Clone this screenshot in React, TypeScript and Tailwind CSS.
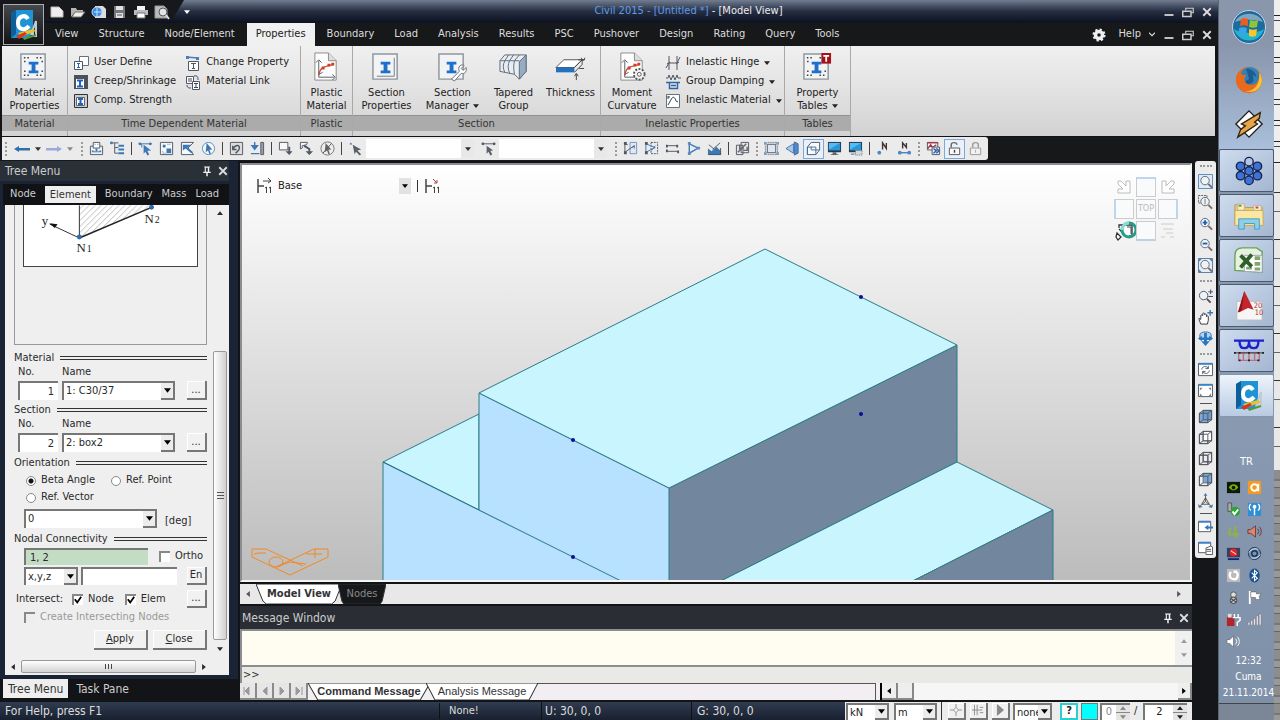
import React from 'react';

type IconProps = { name: string; className?: string };

const BLUE = '#3d78b4';
const INK = '#505862';

const magnifier = (
    <>
        <circle cx="7.5" cy="7" r="4.5" fill="#eef3f7" stroke="#5d6976" />
        <path d="M11 10.5l4 4" stroke="#7b6b6b" strokeWidth="2" />
    </>
);

const cube = (front: string, back: string) => (
    <>
        <path d="M1.500 4.500h9v10h-9zM5.500 1.500h9v10h-9z" fill="none" stroke={INK} />
        <path d="M2 5h8v9H2z" fill={front} />
        <path d="M6 2h8v9H6z" fill={back} />
        <path d="M1.500 4.500l4-3M10.500 4.500l4-3M10.500 14.500l4-3M1.500 14.500l4-3M1.500 4.500h9v10h-9zM5.500 1.500v10h9v-10z" fill="none" stroke={INK} />
    </>
);

// all drawn on a 16x16 grid
const glyphs: Record<string, React.ReactNode> = {
    back: <path d="M0 8l5-3v2h11v2.500H5V11z" fill="#2f6fae" />,
    forward: <path d="M16 8l-5-3v2H0v2.500h11V11z" fill="#9da9dd" />,
    selectGroup: (
        <>
            <path d="M1.500 5.500h13v9h-13z" fill="#eef2f6" stroke={INK} />
            <path d="M4.500 1.500h7v6h-7z" fill="#fff" stroke={INK} />
            <path d="M6 3h1v1H6zM9 3h1v1H9zM3 10h2v2H3zM11 10h2v2h-2zM7 8h2v3H7z" fill={BLUE} />
            <path d="M5 11.500h6" stroke={BLUE} />
        </>
    ),
    treeNodes: (
        <>
            <path d="M1 2h8M5 2v11h4M5 7h4" fill="none" stroke={INK} />
            <path d="M9 4h6v2H9zM9 8h6v2H9zM9 12h6v2H9z" fill={BLUE} />
            <circle cx="1.500" cy="2" r="1.500" fill={BLUE} />
        </>
    ),
    pickLine: (
        <>
            <path d="M1 3h14M4 3v4" stroke={BLUE} />
            <circle cx="2" cy="3" r="1.500" fill={BLUE} />
            <circle cx="13" cy="3" r="1.500" fill={BLUE} />
            <path d="M6 4l8 6-4 .5 2 4-2 1-2-4-2 2z" fill={BLUE} />
        </>
    ),
    pickWindow: (
        <>
            <path d="M1.500 1.500h13v13h-13z" fill="#f6f8fa" stroke={INK} />
            <path d="M4 4h3v3H4zM8 8h5v5H8z" fill={BLUE} />
            <path d="M9 3.500h4M4 11v2h3" fill="none" stroke={BLUE} strokeDasharray="1 1" />
        </>
    ),
    pickPolygon: (
        <>
            <path d="M1.500 1.500h13l-6 6 6 7h-13z" fill="#f6f8fa" stroke={INK} />
            <path d="M3 4h9L8 7l6 5-2 1-6-5-3 2z" fill={BLUE} />
        </>
    ),
    pickCircle: (
        <>
            <circle cx="8" cy="8" r="6.500" fill="#f4f7fa" stroke="#5f8bb8" />
            <path d="M6 2l6 7-3 .3 1.500 4-1.500.7-1.500-4L5 12z" fill={BLUE} />
        </>
    ),
    undoBox: (
        <>
            <path d="M1.500 1.500h13v13h-13z" fill="#ddd" stroke={INK} />
            <path d="M4 5v4h4M4 9c3-6 8-5 7-1 0 2-2 3-4 5" fill="none" stroke={INK} strokeWidth="1.500" />
        </>
    ),
    dropLine: (
        <>
            <path d="M5 1v6M2 5l3 4 3-4zM1 13.500h9" stroke={BLUE} strokeWidth="1.500" fill={BLUE} />
            <path d="M11.500 1.500h3v13h-3z" fill="#9aa1a8" stroke={INK} />
        </>
    ),
    unselectBox: (
        <>
            <path d="M1.500 1.500h9v8h-9z" fill="#f8f8f8" stroke={INK} />
            <path d="M11 6h2v5h2.500L12 15l-4-4h3z" fill={INK} />
        </>
    ),
    unselectPoly: (
        <>
            <path d="M9 1.500H1.500v7l2-1V5L8 4z" fill="#f8f8f8" stroke={INK} />
            <path d="M6 4l6 4v3h3l-4 4-4-4h3V9L5 6z" fill={INK} />
        </>
    ),
    unselectCircle: (
        <>
            <circle cx="8" cy="8" r="7" fill="#eee" stroke="#777" />
            <path d="M6 2l6 7-3 .3 1.500 4-1.500.7-1.500-4L5 12z" fill="#666" />
            <path d="M12 3L3 13" stroke="#555" />
        </>
    ),
    cursorNode: (
        <>
            <path d="M2 2h2v2H2z" fill="#7479c9" />
            <path d="M5 4l9 5-4 1 4 4-1.500 1.500-4-4L7 14z" fill="#59606a" />
        </>
    ),
    cursorElem: (
        <>
            <path d="M1 3h14" stroke={INK} />
            <circle cx="2" cy="3" r="1.500" fill={INK} />
            <circle cx="14" cy="3" r="1.500" fill={INK} />
            <path d="M6 5l7 5-3 .5 2 4-2 1-2-4-2 2z" fill="#59606a" />
        </>
    ),
    activate: (
        <>
            <path d="M7.500 1.500h7v12h-7z" fill="#dfe9f6" stroke="#6e95c6" />
            <path d="M2 2v11M1 3l4 1M2 12l10-7M10 7l2-2v3" fill="none" stroke={INK} />
            <path d="M1 1h3v3H1zM1 11h3v3H1z" fill={INK} />
        </>
    ),
    activateAlt: (
        <>
            <path d="M7.500 1.500h7v12h-7z" fill="none" stroke={INK} strokeDasharray="2 1" />
            <path d="M2 2v11M2 3l10 4L2 12M8 10l4-5" fill="none" stroke={BLUE} />
            <path d="M1 1h3v3H1zM1 11h3v3H1z" fill={INK} />
        </>
    ),
    parallel: (
        <>
            <path d="M2 5h12M2 11h12" stroke={INK} />
            <path d="M1 4h2v3H1zM12 4h2v3h-2zM1 9h2v3H1zM13 10h2v3h-2z" fill={INK} />
        </>
    ),
    triangle: (
        <>
            <path d="M3.500 3v10L13 7.500z" fill="#e2edf8" stroke="#4b78b5" strokeWidth="1.500" />
            <path d="M2 1h3v3H2zM2 12h3v3H2zM12 6h3v3h-3z" fill="#5b8ac1" />
        </>
    ),
    landscape: (
        <>
            <path d="M1 8l4 3 5-5 5 5v4H1z" fill={BLUE} />
            <path d="M2 4l6 5M14 2L6 9M1.500 14.500h13v-7" stroke={INK} fill="none" />
        </>
    ),
    invert: (
        <>
            <path d="M1.500 4.500h7v10h-7zM6.500 1.500h8v11h-8z" fill="#e6e6ee" stroke={INK} />
            <path d="M3 12L12 3M5 4v4h4M9 10h4V6" stroke="#666" strokeWidth="1.500" fill="none" />
        </>
    ),
    fence: (
        <>
            <path d="M3.500 3.500h9v9h-9z" fill="#dce7f2" stroke={INK} />
            <path d="M0 1h3v3H0zM13 1h3v3h-3zM0 12h3v3H0zM13 12h3v3h-3z" fill="#7ba0c8" />
            <path d="M4 1.500h9M4 14.500h9M1.500 5v7M14.500 5v7" stroke={INK} strokeDasharray="1 1" />
        </>
    ),
    perspective: (
        <>
            <path d="M1 8l8-5v10z" fill="#acc7e4" stroke="#4b78b5" />
            <path d="M10 1l4 2v10l-4 2z" fill="#4b8bd0" stroke="#3c6da5" />
        </>
    ),
    hidden: (
        <>
            <path d="M1.500 6.500l4-5h9v8l-4 5h-9z" fill="#f6fafd" stroke={INK} />
            <path d="M1.500 14.500v-8h9M10.500 6.500v8M5.500 6V9.500h9" fill="none" stroke="#4b6d94" />
        </>
    ),
    monitor: (
        <>
            <path d="M1 1h14v11H1z" fill="#283a48" />
            <path d="M2 2h12v8H2z" fill="#2797dc" />
            <path d="M2 2h12L2 9z" fill="#55bbf2" />
            <path d="M6 12h4v2H6zM4 14h8v1H4z" fill="#596570" />
        </>
    ),
    monitorOpt: (
        <>
            <path d="M1 1h14v11H1z" fill="#283a48" />
            <path d="M2 2h12v8H2z" fill="#2797dc" />
            <path d="M2 2h12L2 9z" fill="#55bbf2" />
            <path d="M8 10h7v5H8z" fill="#d3d9de" stroke="#61707c" strokeDasharray="1 1" />
            <path d="M3 14h4" stroke="#596570" />
        </>
    ),
    nodeNo: (
        <>
            <circle cx="3.500" cy="12.500" r="2" fill="#4a85c4" />
            <path d="M7 9V2l4 6V2" fill="none" stroke="#433" strokeWidth="1.500" />
        </>
    ),
    elemNo: (
        <>
            <path d="M3 12.500h10" stroke="#4a85c4" strokeWidth="1.500" />
            <circle cx="3" cy="12.500" r="2" fill="#4a85c4" />
            <circle cx="13" cy="12.500" r="2" fill="#4a85c4" />
            <path d="M6 8V2l4 5V2" fill="none" stroke="#433" strokeWidth="1.500" />
        </>
    ),
    windows: (
        <>
            <path d="M1.500 1.500h11v8h-11z" fill="#fff" stroke={INK} />
            <path d="M1 2h12M2 8l3-4 2 3 4-3" fill="none" stroke="#a83443" strokeWidth="1.500" />
            <path d="M6.500 6.500h8v8h-8z" fill="#e3eaf5" stroke={INK} />
            <path d="M8 8l3 2.500L8 13M11 8l3 2.500L11 13" fill="none" stroke="#325fa9" strokeWidth="1.500" />
        </>
    ),
    unlock: (
        <>
            <path d="M4.500 7V4c0-3 6-3 6 0" fill="none" stroke="#666" strokeWidth="1.500" />
            <path d="M2.500 7.500h11v7h-11z" fill="#fafafa" stroke="#555" />
            <path d="M8 9.500v3" stroke="#444" strokeWidth="1.500" />
        </>
    ),
    lock: (
        <>
            <path d="M5 7V4c0-3 6-3 6 0v3" fill="none" stroke="#999" strokeWidth="1.500" />
            <path d="M2.500 7.500h11v7h-11z" fill="#f1f1f1" stroke="#999" />
            <path d="M8 9.500v3" stroke="#aaa" />
        </>
    ),
    zoomFit: (
        <>
            <path d="M.5.5h15v15H.5z" fill="#dfeaf4" stroke="#5586b9" />
            {magnifier}
        </>
    ),
    zoomWindow: (
        <>
            <path d="M.5.5h9v8h-9z" fill="none" stroke={INK} strokeDasharray="2 1" />
            {magnifier}
            <path d="M7.500 4v6" stroke="#777" />
        </>
    ),
    zoomIn: (
        <>
            {magnifier}
            <path d="M5 7h5M7.500 4.500v5" stroke="#1f63b5" strokeWidth="2" />
        </>
    ),
    zoomOut: (
        <>
            {magnifier}
            <path d="M5 7h5" stroke="#1f63b5" strokeWidth="2" />
        </>
    ),
    zoomAll: (
        <>
            <path d="M.5.5h15v15H.5z" fill="#e7edf2" stroke="#52779c" />
            {magnifier}
            <path d="M1 1h3L1 4zM15 1h-3l3 3zM1 15v-3l3 3z" fill="#4a83be" />
        </>
    ),
    zoomDynamic: (
        <>
            <circle cx="6" cy="7" r="4.500" fill="#eef3f7" stroke="#4d5966" />
            <path d="M9.500 10.500l4 4" stroke="#5b4b4b" strokeWidth="2" />
            <path d="M11 3h5M13.500.5v5M11 8h5" stroke="#447" />
        </>
    ),
    pan: (
        <>
            <path d="M3 15c-1-3-2-4-2-6l2 1V6c0-1 2-1 2 0V4c0-1 2-1 2 0v1c0-1 2-1 2 0v2c0-1 2-1 2 0v4l-1 4z" fill="#fff" stroke="#333" />
            <path d="M10 3h6M13 0v6" stroke={BLUE} strokeWidth="1.500" />
        </>
    ),
    rotate: (
        <>
            <path d="M2 4c0-4 12-4 12 0v5H2z" fill="#b9d3ec" stroke="#2f6ead" />
            <path d="M6.500 2h3v9h3L8 16l-4.500-5h3z" fill="#2776c2" />
            <path d="M0 8l4-3v2h8V5l4 3-4 3V9H4v2z" fill="#2776c2" />
        </>
    ),
    redraw: (
        <>
            <path d="M.5 1.500h15v13H.5z" fill="#fff" stroke={INK} />
            <path d="M1 2h14" stroke="#3a82cb" strokeWidth="2" />
            <path d="M4 8c0-4 6-4 7-1M12 9c0 4-6 4-7 1M11 4v3H8M5 13v-3h3" fill="none" stroke={INK} />
        </>
    ),
    fullView: (
        <>
            <path d="M.5 1.500h15v13H.5z" fill="#fff" stroke={INK} />
            <path d="M1 2h14" stroke="#3a82cb" strokeWidth="2" />
            <path d="M2 5h3L2 8zM14 5h-3l3 3zM2 14v-3l3 3zM14 14v-3l-3 3z" fill="#78818a" />
        </>
    ),
    cubeSolid: cube('#7ea9dc', '#6f9bd2'),
    cubeWire: cube('none', '#ffffff'),
    cubeWire2: cube('none', 'none'),
    cubeHalf: cube('#eef2f7', '#7ba6d8'),
    axes: (
        <>
            <path d="M8 1v8l-6 5M8 9l6 5M8 5l-4 7h8z" fill="none" stroke={INK} />
            <path d="M6 3l2-3 2 3zM0 12l1 4 4-1zM16 12l-1 4-4-1z" fill="#4879ad" />
        </>
    ),
    winLeft: (
        <>
            <path d="M.5 2.500h13v11H.5z" fill="#fff" stroke={INK} />
            <path d="M1 3h12" stroke="#3a82cb" strokeWidth="2" />
            <path d="M7 9l4-3v2h5v2h-5v2z" fill="#3578b9" />
        </>
    ),
    winHand: (
        <>
            <path d="M.5 2.500h13v11H.5z" fill="#fff" stroke={INK} />
            <path d="M1 3h12" stroke="#3a82cb" strokeWidth="2" />
            <path d="M8.500 8.500l5-2 2 1v8h-7zM9 10h5M9 12h5" fill="#fff" stroke={INK} />
        </>
    ),
    story: (
        <>
            <path d="M2 1v14M2 8h6" stroke="#444" strokeWidth="1.500" />
            <path d="M7 3h8M12 0l3 3-3 2M9 10l1.500-1v6M13 10l1.500-1v6" fill="none" stroke="#444" />
        </>
    ),
    storyAlt: (
        <>
            <path d="M2 1v14M2 8h6" stroke="#444" strokeWidth="1.500" />
            <path d="M9 1l4 4M13 2v3h-3" fill="none" stroke="#a44" />
            <path d="M9 10l1.500-1v6M13 10l1.500-1v6" fill="none" stroke="#444" />
        </>
    ),
    userDefine: (
        <>
            <path d="M6.500 1.500h9v9h-9z" fill="#fff" stroke="#67707a" />
            <path d="M1.500 6.500h8v8h-8z" fill="#fff" stroke={INK} />
            <path d="M4 8.500h3M5.500 8.500v4M4 12.500h3" stroke="#2865b2" />
        </>
    ),
    creep: (
        <>
            <path d="M1 1h14v14H1z" fill="#4c525a" />
            <path d="M3 5h8v9H3z" fill="#fff" />
            <path d="M4 6.500h6M7 6.500v6M4 12.500h6" stroke="#1d5fc4" strokeWidth="2" />
        </>
    ),
    comp: (
        <>
            <path d="M1.500 1.500h13v13h-13z" fill="#c8ced6" stroke="#333" />
            <path d="M3.500 4.500h8v8h-8z" fill="#fff" stroke="#666" />
            <path d="M5 6h5M7.500 6v5M5 11h5" stroke="#1d5fc4" strokeWidth="2" />
        </>
    ),
    changeProp: (
        <>
            <path d="M1 2l12 1" stroke="#4c7fb9" strokeWidth="1.500" />
            <path d="M1 1h3v3H1zM11 2h3v3h-3z" fill="#4c7fb9" />
            <path d="M3.500 6.500h10v9h-10z" fill="#fff" stroke={INK} />
            <path d="M6 8.500h5M8.500 8.500v5M7 13.500h3" stroke={INK} />
        </>
    ),
    link: (
        <>
            <path d="M1.500 2.500h7v7h-7z" fill="#fff" stroke={INK} />
            <path d="M7.500 7.500h7v8h-7z" fill="#fff" stroke={INK} />
            <path d="M3 5h4M3 7h4M9 9.500h4M11 9.500v4M9 13.500h4M9 2c4-1 4 2 4 4M2 11c0 3 2 3 4 3" fill="none" stroke="#446" />
        </>
    ),
    hinge: <path d="M4 1v14M12 1v14M1 13l3-5h8l3-6M2 9l3-2M11 9l3-2" fill="none" stroke={INK} />,
    damping: (
        <>
            <path d="M1 4h2l1-3 2 5 2-5 2 5 2-5 1 3h3" fill="none" stroke={INK} />
            <path d="M1 8.500h14M4.500 8.500v6h8v-6M6 11.500h5" fill="none" stroke="#2f65a6" strokeWidth="1.500" />
        </>
    ),
    inelastic: (
        <>
            <path d="M1.500 1.500h13v13h-13z" fill="#fff" stroke="#68717b" />
            <path d="M3 12l4-7c2-2 3 0 4 3l2 1M3 4h2M3 3v3" fill="none" stroke="#345" />
        </>
    ),
    pin: <path d="M4 2h8v1h-1v6h2v1.500H9V15H7v-4.500H3V9h2V3H4zM6.500 3.500V9H9V3.500z" fill="#f1f1f1" fillRule="evenodd" />,
    close: <path d="M3 3l10 10M13 3L3 13" stroke="#ddd" strokeWidth="2.400" />,
    min: <path d="M2 12h12" stroke="#ccc" strokeWidth="2.500" />,
    restore: (
        <>
            <path d="M5 6V3h10v6h-3" fill="none" stroke="#ccc" strokeWidth="1.500" />
            <path d="M1 7h11v7H1z" fill="none" stroke="#ccc" strokeWidth="2" />
        </>
    ),
    newFile: <path d="M2 3h8l4 4v6H2z" fill="#f0efee" stroke="#bbb" />,
    open: (
        <>
            <path d="M1 4h5l1 2h6v2H5l-4 5z" fill="#b8b4ae" />
            <path d="M5 8h10l-4 5H2z" fill="#eee" stroke="#777" />
        </>
    ),
    web: (
        <>
            <path d="M4 2h8l3 3v9H4z" fill="#ddd" />
            <circle cx="6" cy="8" r="5" fill="#3c8bdd" stroke="#bcdcff" />
            <path d="M6 4v10M3 8h7" stroke="#c7e3ff" />
        </>
    ),
    save: (
        <>
            <path d="M2 2h11v12H2z" fill="#77777b" />
            <path d="M4 2h7v4H4zM4 9h7v5H4z" fill="#e0e0e6" />
            <path d="M5 11h5" stroke="#555" />
        </>
    ),
    print: (
        <>
            <path d="M4 2h8v5H4z" fill="#f3f3f3" />
            <path d="M1 6h14v5H1z" fill="#b9bcc2" />
            <path d="M4 9h8v5H4z" fill="#fff" stroke="#777" />
        </>
    ),
    preview: (
        <>
            <path d="M1 2h9l3 3v9H1z" fill="#bcbcbe" stroke="#999" />
            <circle cx="9" cy="8" r="4" fill="#e4e4e4" stroke="#555" />
            <path d="M12 11l3 4" stroke="#ddd" strokeWidth="2" />
        </>
    ),
    gear: (
        <>
            <circle cx="8" cy="8" r="6" fill="none" stroke="#eee" strokeWidth="3" strokeDasharray="2.400 2.300" />
            <circle cx="8" cy="8" r="4" fill="none" stroke="#eee" strokeWidth="4" />
        </>
    ),
};

const Icon = ({ name, className = 'size-4' }: IconProps) => (
    <svg viewBox="0 0 16 16" className={`shrink-0 ${className}`} aria-hidden="true">
        {glyphs[name]}
    </svg>
);

const iBeam = <path d="M10 10h10v3h-3v6h3v3H10v-3h3v-6h-3z" fill="#1f70c8" />;
const plate = <path d="M2 2h25v26H2z" fill="#f1f3f5" stroke="#8f969e" strokeWidth="1.500" />;
const curve = (
    <>
        <path d="M4 1h14l8 8v20H4z" fill="#fdfdfd" stroke="#8a8a8a" />
        <path d="M18 1v8h8" fill="#ddd" stroke="#8a8a8a" />
        <path d="M8 9v17h16M8 23l4-2M5 11l3-3 3 3M22 23l3 3-3 3" fill="none" stroke="#59626c" />
        <path d="M8 24c1-8 5-9 15-11" fill="none" stroke="#c34d36" strokeWidth="1.500" />
        <path d="M11 15h3v3h-3zM17 12h3v3h-3zM21 11h3v3h-3z" fill="#cf4028" />
    </>
);
const dots = <path d="M5 6h7M18 6h7M5 24h7M18 24h7M6 9v3M6 19v3M24 9v3M24 19v3" stroke="#444" strokeWidth="1.600" strokeDasharray="1.600 2" fill="none" />;

const bigGlyphs: Record<string, React.ReactNode> = {
    material: <>{plate}{dots}{iBeam}</>,
    plastic: curve,
    section: (
        <>
            {plate}
            <path d="M6 25h18V6" stroke="#777f88" fill="none" />
            {iBeam}
        </>
    ),
    manager: (
        <>
            {plate}
            {iBeam}
            <path d="M15 28l8-8c-2-5 2-8 5-6l-3 3 2 2 3-3c1 5-2 7-5 6l-7 8z" fill="#fff" stroke="#68717a" />
        </>
    ),
    tapered: (
        <>
            <path d="M2 9l5-6h22v17l-7 8-5-5-15-3z" fill="#e8edf3" stroke="#606b77" />
            <path d="M22 10l7-7v17l-7 8z" fill="#96abc4" stroke="#606b77" />
            <path d="M7 9c-2 4-2 8 0 12M12 9c-2 4-2 8 0 13M17 9c-1 4-1 9 0 14M2 9h20M7 9l4-6M12 9l4-6M17 9l5-6" fill="none" stroke="#606b77" />
        </>
    ),
    thickness: (
        <>
            <path d="M1 16l8-8h19l-8 8z" fill="#fff" stroke="#555" />
            <path d="M1 16h19v5H1z" fill="#2470c0" />
            <path d="M20 16l8-8v5l-8 8M24 8h7M25 17h5M27 6l2 3 2-3M22 29v-6M20 25l2-3 2 3" fill="none" stroke="#444" />
        </>
    ),
    moment: (
        <>
            {curve}
            <circle cx="23" cy="23" r="5.500" fill="#f5f5f5" stroke="#555" strokeWidth="2" strokeDasharray="2 1.500" />
            <circle cx="23" cy="23" r="2" fill="#fff" stroke="#555" />
        </>
    ),
    tables: (
        <>
            {plate}
            {dots}
            {iBeam}
            <path d="M20 1h10v11H20z" fill="#a3121a" />
            <path d="M22 4h6M25 4v6" stroke="#fff" strokeWidth="1.800" />
        </>
    ),
};

const Caret = ({ className = '' }: { className?: string }) => (
    <svg viewBox="0 0 8 5" className={`h-[4px] w-[6px] shrink-0 ${className}`} aria-hidden="true">
        <path d="M0 0h8L4 5z" fill="currentColor" />
    </svg>
);

const BigButton = ({ icon, lines, menu, className = '' }: { icon: string; lines: string[]; menu?: boolean; className?: string }) => (
    <button className={`flex flex-col items-center pt-[6px] leading-[13px] ${className}`}>
        <svg viewBox="0 0 32 32" className="mb-[3px] h-[31px] w-[31px]" aria-hidden="true">
            {bigGlyphs[icon]}
        </svg>
        {lines.map((line, i) => (
            <span key={line} className="flex items-center gap-1 whitespace-nowrap">
                {line}
                {menu && i === lines.length - 1 && <Caret />}
            </span>
        ))}
    </button>
);

const SmallButton = ({ icon, label, menu }: { icon: string; label: string; menu?: boolean }) => (
    <button className="flex h-[19px] items-center gap-[5px] whitespace-nowrap">
        <Icon name={icon} />
        {label}
        {menu && <Caret />}
    </button>
);

const RibbonGroup = ({ title, className, children }: { title: string; className: string; children: React.ReactNode }) => (
    <section className={`flex shrink-0 flex-col border-r border-[#a9a9a9] ${className}`}>
        <div className="flex flex-1 justify-center">{children}</div>
        <h2 className="mb-[5px] h-[16px] border-t border-[#909090] bg-[#ababab] text-center leading-[15px] text-[#333]">{title}</h2>
    </section>
);

const menus = ['View', 'Structure', 'Node/Element', 'Properties', 'Boundary', 'Load', 'Analysis', 'Results', 'PSC', 'Pushover', 'Design', 'Rating', 'Query', 'Tools'];

const WindowButtons = () => (
    <div className="flex items-center gap-[7px]">
        <button aria-label="Minimize"><Icon name="min" className="size-3" /></button>
        <button aria-label="Restore"><Icon name="restore" className="size-3" /></button>
        <button aria-label="Close"><Icon name="close" className="size-3" /></button>
    </div>
);

const Logo = ({ className }: { className: string }) => (
    <svg viewBox="0 0 32 32" className={className} aria-hidden="true">
        <path d="M3 4l5-3h17v23l-5 5H3z" fill="#1f93d6" />
        <path d="M3 4l5-3v24l-5 4z" fill="#0d5f9b" />
        <path d="M20 10c-3-5-10-3-10 4s7 8 11 3" fill="none" stroke="#fff" strokeWidth="4" />
        <path d="M23 26l5-14v15h-3v-5" fill="none" stroke="#c3cbd2" strokeWidth="2" />
        <path d="M10 24l15-4 3 2-15 6z" fill="#e8c22c" />
        <path d="M8 27l9-4 2 2-8 5z" fill="#d8371f" />
        <path d="M15 29l13-4v2l-12 4z" fill="#4f9a3a" />
    </svg>
);

const Header = () => (
    <header className="relative shrink-0">
        <div className="flex h-[23px] items-center bg-linear-to-b from-[#727d92] via-[#252e42] to-[#0c1120] pr-[5px]">
            <div className="flex h-full w-[184px] items-center gap-[5px] bg-[#17181b] pl-[49px] [clip-path:polygon(0_0,100%_0,94%_80%,91%_88%,0_88%)]">
                {['newFile', 'open', 'web', 'save', 'print', 'preview'].map((n) => (
                    <button key={n} aria-label={n}><Icon name={n} /></button>
                ))}
            </div>
            <Caret className="text-white" />
            <h1 className="flex-1 pl-6 text-center text-[#eee]">
                <span className="text-[#5f9be6]">Civil 2015 - [Untitled *]</span> - [Model View]
            </h1>
            <WindowButtons />
        </div>
        <nav className="flex h-[23px] items-center bg-[#17181a] pl-[45px] pr-[5px] text-[#ddd]">
            {menus.map((m) => (
                <button key={m} className={m === 'Properties' ? 'mx-[2px] h-full bg-[#f0f0f0] px-[9px] text-[#222]' : 'px-[10px]'}>
                    {m}
                </button>
            ))}
            <span className="flex-1" />
            <button aria-label="Settings" className="mr-3"><Icon name="gear" className="size-[14px]" /></button>
            <button className="mr-2 flex items-center gap-2">
                Help
                <svg viewBox="0 0 8 5" className="h-[5px] w-[6px]" aria-hidden="true"><path d="M0 0l4 4 4-4" stroke="#ddd" strokeWidth="1.500" fill="none" /></svg>
            </button>
            <WindowButtons />
        </nav>
        <button aria-label="Application menu" className="absolute left-[3px] top-[4px] flex h-[41px] w-[41px] items-center justify-center border border-[#a9adb2] bg-linear-to-b from-[#45484c] to-[#141517]">
            <Logo className="size-8" />
        </button>
    </header>
);

const Ribbon = () => (
    <div className="mr-[3px] ml-[2px] flex h-[90px] shrink-0 bg-linear-to-b from-[#f0f0f0] via-[#e2e2e2] to-[#d2d2d2] text-[#222]">
        <RibbonGroup title="Material" className="w-[66px]">
            <BigButton icon="material" lines={['Material', 'Properties']} />
        </RibbonGroup>
        <RibbonGroup title="Time Dependent Material" className="w-[233px]">
            <div className="flex w-full gap-[9px] pt-[7px] pl-[5px]">
                <div className="flex flex-col">
                    <SmallButton icon="userDefine" label="User Define" />
                    <SmallButton icon="creep" label="Creep/Shrinkage" />
                    <SmallButton icon="comp" label="Comp. Strength" />
                </div>
                <div className="flex flex-col">
                    <SmallButton icon="changeProp" label="Change Property" />
                    <SmallButton icon="link" label="Material Link" />
                </div>
            </div>
        </RibbonGroup>
        <RibbonGroup title="Plastic" className="w-[52px]">
            <BigButton icon="plastic" lines={['Plastic', 'Material']} />
        </RibbonGroup>
        <RibbonGroup title="Section" className="w-[248px]">
            <BigButton icon="section" lines={['Section', 'Properties']} className="w-[66px]" />
            <BigButton icon="manager" lines={['Section', 'Manager']} menu className="w-[66px]" />
            <BigButton icon="tapered" lines={['Tapered', 'Group']} className="w-[56px]" />
            <BigButton icon="thickness" lines={['Thickness']} className="w-[58px]" />
        </RibbonGroup>
        <RibbonGroup title="Inelastic Properties" className="w-[184px]">
            <BigButton icon="moment" lines={['Moment', 'Curvature']} className="w-[62px]" />
            <div className="flex flex-1 flex-col pt-[7px] pl-[2px]">
                <SmallButton icon="hinge" label="Inelastic Hinge" menu />
                <SmallButton icon="damping" label="Group Damping" menu />
                <SmallButton icon="inelastic" label="Inelastic Material" menu />
            </div>
        </RibbonGroup>
        <RibbonGroup title="Tables" className="w-[66px]">
            <BigButton icon="tables" lines={['Property', 'Tables']} menu />
        </RibbonGroup>
    </div>
);

const Grip = () => <span className="mx-[3px] h-[14px] w-0 border-l-2 border-dotted border-[#999]" />;

const ToolRow = ({ items }: { items: string[] }) => (
    <>
        {items.map((n, i) =>
            n === '|' ? (
                <span key={i} className="flex w-[7px] justify-center"><span className="h-[13px] w-px bg-[#444]" /></span>
            ) : (
                <button key={i} aria-label={n} className={n === 'hidden' || n === 'unlock' ? 'flex h-5 w-[21px] items-center justify-center border border-[#7fa8d8] bg-[#e9f1fa]' : 'flex w-[21px] justify-center'}>
                    <Icon name={n} className="size-[15px]" />
                </button>
            ),
        )}
    </>
);

const FlatSelect = ({ label, className }: { label: string; className: string }) => (
    <span className={`relative flex ${className}`}>
        <select aria-label={label} className="h-full w-full appearance-none bg-white" />
        <span className="pointer-events-none absolute inset-y-0 right-0 flex w-[13px] items-center justify-center bg-[#e8e8e8]"><Caret /></span>
    </span>
);

const Toolbar = () => (
    <div className="mt-[1px] flex h-[24px] shrink-0 bg-[#17181a] pl-[2px]">
        <div className="flex h-[23px] items-center rounded-r-[3px] bg-[#ebebeb] text-[#333]">
            <Grip />
            <div className="flex w-[68px] items-center gap-[5px] pl-[4px]">
                <button aria-label="Undo"><Icon name="back" /></button>
                <Caret />
                <button aria-label="Redo"><Icon name="forward" /></button>
                <Caret className="text-[#888]" />
            </div>
            <Grip />
            <ToolRow items={['selectGroup', 'treeNodes', '|', 'pickLine', 'pickWindow', 'pickPolygon', 'pickCircle', '|', 'undoBox', 'dropLine', '|', 'unselectBox', 'unselectPoly', 'unselectCircle', '|', 'cursorNode']} />
            <FlatSelect label="Select nodes" className="h-[19px] w-[108px]" />
            <span className="w-1" />
            <ToolRow items={['cursorElem']} />
            <FlatSelect label="Select elements" className="h-[19px] w-[108px]" />
            <span className="w-[5px]" />
            <Grip />
            <ToolRow items={['activate', 'activateAlt', 'parallel', 'triangle', 'landscape', '|', 'invert']} />
            <Grip />
            <ToolRow items={['fence', 'perspective', 'hidden', 'monitor', 'monitorOpt', '|', 'nodeNo', 'elemNo']} />
            <Grip />
            <ToolRow items={['windows', 'unlock', 'lock']} />
            <span className="w-[2px]" />
        </div>
    </div>
);

const GroupHeading = ({ children }: { children: string }) => (
    <h3 className="flex h-[14px] items-center gap-[6px] leading-[14px]">
        {children}
        <span className="h-[4px] flex-1 border-y border-[#333]" />
    </h3>
);

const Combo = ({ id, label, value, className }: { id: string; label?: string; value: string; className: string }) => (
    <span className={`relative flex border-t-2 border-l-2 border-[#777] bg-white ${className}`}>
        <select id={id} aria-label={label} className="w-full appearance-none pl-[2px] outline-none" defaultValue={value}>
            <option>{value}</option>
        </select>
        <span className="pointer-events-none absolute inset-y-0 right-0 flex w-[14px] items-center justify-center border-r-2 border-b-2 border-[#777] bg-[#ececec] text-black">
            <Caret className="h-[5px] w-[7px]" />
        </span>
    </span>
);

const RaisedButton = ({ children, className }: { children: React.ReactNode; className: string }) => (
    <button className={`border-r-2 border-b-2 border-[#777] bg-[#f1f1f1] text-center shadow-[inset_1px_1px_0_#fff] ${className}`}>{children}</button>
);

const Radio = ({ id, label, checked }: { id: string; label: string; checked?: boolean }) => (
    <label htmlFor={id} className="flex items-center gap-[5px]">
        <input
            id={id}
            type="radio"
            name="orientation"
            defaultChecked={checked}
            className="size-[10px] appearance-none rounded-full border border-[#888] bg-white checked:bg-[radial-gradient(circle,#111_2px,#fff_3px)]"
        />
        {label}
    </label>
);

const Check = ({ id, label, checked, disabled }: { id: string; label: string; checked?: boolean; disabled?: boolean }) => (
    <label htmlFor={id} className={`flex items-center gap-[5px] whitespace-nowrap ${disabled ? 'text-[#999]' : ''}`}>
        <span className="relative flex">
            <input id={id} type="checkbox" defaultChecked={checked} disabled={disabled} className="size-[11px] appearance-none border-t-2 border-l-2 border-[#888] bg-white disabled:bg-[#eee]" />
            {checked && (
                <svg viewBox="0 0 10 10" className="pointer-events-none absolute left-[2px] top-[2px] size-2" aria-hidden="true"><path d="M1 4l3 4 5-7" fill="none" stroke="#000" strokeWidth="2.200" /></svg>
            )}
        </span>
        {label}
    </label>
);

const AssignRow = ({ id, no, name }: { id: string; no: string; name: string }) => (
    <div className="flex items-end">
        <div className="ml-1 flex w-10 flex-col">
            <label htmlFor={`${id}-no`} className="h-4 leading-[14px]">No.</label>
            <input id={`${id}-no`} defaultValue={no} className="h-[19px] w-full border-t-2 border-l-2 border-[#777] bg-white pr-1 text-right" />
        </div>
        <div className="ml-1 flex flex-1 flex-col">
            <label htmlFor={`${id}-name`} className="h-4 leading-[14px]">Name</label>
            <Combo id={`${id}-name`} value={name} className="h-[19px]" />
        </div>
        <RaisedButton className="ml-3 h-[19px] w-5 leading-3">...</RaisedButton>
    </div>
);

const AxisDiagram = () => (
    <svg viewBox="0 0 175 61" className="mx-auto block h-[62px] w-[175px] border border-t-0 border-[#444] bg-white" role="img">
        <defs>
            <pattern id="hatch" width="6" height="6" patternUnits="userSpaceOnUse">
                <path d="M0 6l6-6" stroke="#aaa" strokeWidth=".8" />
            </pattern>
        </defs>
        <path d="M56 0v33L129 2V0z" fill="url(#hatch)" />
        <path d="M56 0v33" stroke="#333" />
        <path d="M56 33L129 2" stroke="#222" strokeWidth="1.500" />
        <path d="M56 33L26 19" stroke="#333" />
        <path d="M26 18l8 1-3 4z" fill="#111" />
        <circle cx="56" cy="32" r="2.500" fill="#2d6bb1" />
        <circle cx="129" cy="2" r="2.500" fill="#2d6bb1" />
        <g className="font-['Liberation_Serif',serif] text-[13px]" fill="#222">
            <text x="18" y="20">y</text>
            <text x="53" y="47">N<tspan fontSize="10" dx="1">1</tspan></text>
            <text x="122" y="18">N<tspan fontSize="10" dx="1">2</tspan></text>
        </g>
    </svg>
);

const TreePanel = () => (
    <aside className="flex w-[238px] shrink-0 flex-col bg-[#1b2435] pr-[9px]">
        <div className="flex h-[20px] items-center bg-[#2a3038] pl-[5px] text-[12px] text-[#ccc]">
            <h2 className="flex-1">Tree Menu</h2>
            <button aria-label="Pin" className="mr-1"><Icon name="pin" className="size-3" /></button>
            <button aria-label="Close panel"><Icon name="close" className="size-3" /></button>
        </div>
        <div className="mt-[3px] ml-[3px] flex h-[21px] items-center gap-[9px] bg-[#101216] pl-[7px] text-[#ccc]">
            {['Node', 'Element', 'Boundary', 'Mass', 'Load'].map((t) => (
                <button key={t} className={t === 'Element' ? 'h-[17px] bg-[#eee] px-[5px] leading-4 text-[#333]' : ''}>
                    {t}
                </button>
            ))}
        </div>
        <div className="ml-[5px] flex min-h-0 flex-1 flex-col bg-[#efefef] text-[#2a2a2a]">
            <div className="flex min-h-0 flex-1">
                <div className="flex min-w-0 flex-1 flex-col pr-[6px] pl-[9px]">
                    <div className="mb-[6px] h-[140px] border border-t-0 border-[#999]"><AxisDiagram /></div>
                    <GroupHeading>Material</GroupHeading>
                    <AssignRow id="material" no="1" name="1: C30/37" />
                    <div className="h-[3px]" />
                    <GroupHeading>Section</GroupHeading>
                    <AssignRow id="section" no="2" name="2: box2" />
                    <div className="h-1" />
                    <GroupHeading>Orientation</GroupHeading>
                    <div className="mt-[2px] ml-3 grid h-[34px] grid-cols-[85px_1fr] items-center">
                        <Radio id="beta" label="Beta Angle" checked />
                        <Radio id="refpoint" label="Ref. Point" />
                        <Radio id="refvector" label="Ref. Vector" />
                    </div>
                    <div className="mt-[3px] ml-[10px] flex items-end gap-2">
                        <Combo id="angle" label="Angle" value="0" className="h-[19px] w-[133px]" />
                        <span className="leading-[14px]">[deg]</span>
                    </div>
                    <div className="h-1" />
                    <GroupHeading>Nodal Connectivity</GroupHeading>
                    <div className="mt-[2px] ml-[10px] flex items-center gap-[11px]">
                        <input aria-label="Nodal connectivity" defaultValue="1, 2" className="h-[17px] w-[124px] border-t-2 border-l-2 border-[#777] bg-[#c3dcc4] pl-1" />
                        <Check id="ortho" label="Ortho" />
                    </div>
                    <div className="mt-[2px] ml-[10px] flex">
                        <Combo id="coord" label="Coordinates" value="x,y,z" className="h-[18px] w-[54px]" />
                        <input aria-label="Coordinate value" className="ml-[3px] h-[18px] min-w-0 flex-1 border-t-2 border-l-2 border-[#777] bg-white" />
                        <RaisedButton className="ml-[10px] h-[18px] w-5 leading-3">En</RaisedButton>
                    </div>
                    <div className="mt-[5px] flex h-[18px] items-center">
                        <span className="ml-[2px] w-[56px]">Intersect:</span>
                        <Check id="node" label="Node" checked />
                        <span className="w-[11px]" />
                        <Check id="elem" label="Elem" checked />
                        <span className="flex-1" />
                        <RaisedButton className="h-[18px] w-5 leading-3">...</RaisedButton>
                    </div>
                    <div className="ml-[10px] flex h-[18px] items-center">
                        <Check id="create" label="Create Intersecting Nodes" disabled />
                    </div>
                    <div className="mt-[4px] flex justify-end gap-[5px]">
                        <RaisedButton className="h-5 w-[54px]"><u>A</u>pply</RaisedButton>
                        <RaisedButton className="h-5 w-[54px]"><u>C</u>lose</RaisedButton>
                    </div>
                </div>
                <div className="mr-[2px] flex w-[14px] flex-col items-center">
                    <Caret className="mt-[6px] rotate-180" />
                    <div className="mt-[136px] flex w-full flex-1 items-center justify-center rounded-[2px] border border-[#999] bg-linear-to-r from-white to-[#cfcfcf]">
                        <span className="h-[7px] w-[7px] border-y border-[#555] bg-[linear-gradient(#555,#555)] bg-[length:100%_1px] bg-center bg-no-repeat" />
                    </div>
                    <Caret className="my-[7px]" />
                </div>
            </div>
            <div className="flex h-[17px] items-center gap-[5px] pr-[22px] pl-[5px]">
                <Caret className="rotate-90" />
                <div className="flex h-[13px] flex-1 items-center justify-center rounded-[2px] border border-[#999] bg-linear-to-b from-white to-[#d3d3d3]">
                    <span className="h-[5px] w-[7px] border-x border-[#444] bg-[linear-gradient(#444,#444)] bg-[length:1px_100%] bg-center bg-no-repeat" />
                </div>
                <Caret className="-rotate-90" />
            </div>
        </div>
        <div className="mt-[4px] -mr-[9px] flex h-[23px] items-start bg-[#131417] pl-[3px] text-[12px] text-[#ccc]">
            <button className="h-[19px] bg-[#eee] px-[5px] text-[#333]">Tree Menu</button>
            <button className="h-[19px] px-2">Task Pane</button>
        </div>
    </aside>
);

const edge = '#2d7b85';

// isometric boxes, the parts below the canvas are clipped
const Model = () => (
    <svg className="absolute inset-0 h-full w-full" role="img">
        <g stroke={edge} strokeWidth="1">
            <path d="M141 297l96-48v97z" fill="#c9f5ff" />
            <path d="M141 297l260 130H141z" fill="#b8e0ff" />
            <path d="M237 345V228l190 95v120z" fill="#b8e0ff" stroke="none" />
            <path d="M141 297l260 130M237 345V228l190 95" fill="none" />
            <path d="M427 323l288-143v117L457 427h-30z" fill="#72869d" />
            <path d="M523 84L237 228l190 95 288-143z" fill="#c9f5ff" />
            <path d="M715 297l96 48-162 82H457z" fill="#c9f5ff" />
            <path d="M811 345v82H649z" fill="#72869d" />
        </g>
        <g fill="#0b0ba0">
            <circle cx="619" cy="132" r="2" />
            <circle cx="619" cy="249" r="2" />
            <circle cx="331" cy="275" r="2" />
            <circle cx="331" cy="392" r="2" />
        </g>
        <g fill="none" stroke="#f08a24">
            <path d="M10 384h14l37 17M10 384v8l38 18 38-18v-8H72l-38 18M12 389l4-1h8M64 389h16M73 384v9M34 402l14-5 16 2" />
            <ellipse cx="34" cy="397" rx="7" ry="5" />
        </g>
    </svg>
);

const ViewCube = () => {
    const face = 'size-5 border border-[#ccc] bg-[#f8fafc]';
    return (
        <div className="absolute top-[12px] right-[12px] grid grid-cols-3 gap-[2px] text-[9px] text-[#bbb]">
            <svg viewBox="0 0 20 20" className="size-5"><path d="M4 4h3l5 5V4h4v12H4v-4h5L4 7z" fill="#fff" stroke="#bbb" /></svg>
            <button aria-label="Back view" className={`${face} border-t-2 border-t-[#bcd6ee]`} />
            <svg viewBox="0 0 20 20" className="size-5"><path d="M16 4h-3L8 9V4H4v12h12v-4h-5l5-5z" fill="#fff" stroke="#bbb" /></svg>
            <button aria-label="Left view" className={`${face} border-l-2 border-l-[#bcd6ee]`} />
            <button className={face}>TOP</button>
            <button aria-label="Right view" className={`${face} border-r-2 border-r-[#bcd6ee]`} />
            <svg viewBox="0 0 20 20" className="size-5 overflow-visible">
                <path d="M5 7V4h13v11h-3M3 12l4 4-3 3-2-3zM5 8l4 4" fill="#fff" stroke="#333" strokeWidth="1.300" />
                <circle cx="15" cy="9" r="7" fill="none" stroke="#239d88" strokeWidth="3" />
                <path d="M8 9a7 7 0 0 1 7-7" fill="none" stroke="#8bdcd0" strokeWidth="3" />
                <path d="M13 6h4v7" fill="none" stroke="#445" />
            </svg>
            <button aria-label="Front view" className={`${face} border-b-2 border-b-[#bcd0e6]`} />
            <svg viewBox="0 0 20 20" className="size-5"><path d="M3 3h13M5 8h10M8 12h7M3 16h4M12 16h4" stroke="#ccc" /></svg>
        </div>
    );
};

const SheetTab = ({ children, left, dark, bold, className }: { children: string; left?: boolean; dark?: boolean; bold?: boolean; className: string }) => (
    <button className={`relative h-full ${className}`}>
        <svg viewBox="0 0 100 20" preserveAspectRatio="none" className="absolute inset-0 h-full w-full" aria-hidden="true">
            <path d={left ? 'M0 0l8 17 4 3h76l4-3 8-17z' : 'M0 0l8 20h84l8-20z'} fill={dark ? '#17181a' : '#fff'} stroke="#333" vectorEffect="non-scaling-stroke" />
        </svg>
        <span className={`relative whitespace-nowrap ${bold ? 'font-bold' : ''} ${dark ? 'text-[#888]' : 'text-[#333]'}`}>{children}</span>
    </button>
);

const ModelView = () => (
    <section className="flex min-h-0 flex-1 flex-col">
        <div className="relative min-h-0 flex-1 overflow-hidden border-2 border-[#f4f4f4] border-t-[#8b8d90] border-l-[#8b8d90] bg-linear-to-b from-white to-[#bcbcbc]">
            <Model />
            <div className="absolute top-[11px] left-[14px] flex h-5 items-center">
                <Icon name="story" />
                <div className="relative ml-1 flex h-4 w-[135px]">
                    <select aria-label="Story" className="w-full appearance-none pl-[2px] leading-4 text-[#222]">
                        <option>Base</option>
                    </select>
                    <span className="pointer-events-none absolute inset-y-0 right-0 flex w-3 items-center justify-center bg-[#e2e2e2]"><Caret /></span>
                </div>
                <span className="ml-[6px] h-3 w-px bg-[#333]" />
                <button aria-label="Next story" className="ml-[6px]"><Icon name="storyAlt" /></button>
            </div>
            <ViewCube />
        </div>
        <div className="mt-[2px] flex h-[20px] items-center bg-[#e8e8e8]">
            <Caret className="mx-[5px] rotate-90 text-[#555]" />
            <SheetTab left bold className="w-[86px]">Model View</SheetTab>
            <SheetTab left dark className="-ml-1 w-[48px]">Nodes</SheetTab>
            <span className="flex-1" />
            <Caret className="mr-[10px] -rotate-90 text-[#555]" />
        </div>
    </section>
);

const MessageWindow = () => (
    <section className="flex shrink-0 flex-col">
        <div className="mt-[2px] flex h-[23px] items-center bg-[#2a2d34] pr-[2px] pl-[2px] text-[12px] text-[#ccc]">
            <h2 className="flex-1">Message Window</h2>
            <button aria-label="Pin messages" className="mr-1"><Icon name="pin" className="size-3" /></button>
            <button aria-label="Close messages"><Icon name="close" className="size-3" /></button>
        </div>
        <div className="flex h-[36px] border-t-2 border-l-2 border-[#8b8d90] bg-[#fffcf2]">
            <textarea aria-label="Messages" readOnly className="flex-1 resize-none outline-none" />
            <div className="flex w-[17px] flex-col items-center justify-between bg-[#f0f0f0] py-2 text-[#999]">
                <Caret className="rotate-180" />
                <Caret />
            </div>
        </div>
        <div className="flex h-[18px] items-center border-t-2 border-l-2 border-[#8b8d90] bg-[#e9e9e6] pl-[1px] text-[#333]">
            <label htmlFor="cmd">&gt;&gt;</label>
            <input id="cmd" className="ml-1 flex-1 outline-none" />
        </div>
        <div className="flex h-[17px] items-stretch bg-[#f2eef2] font-['Liberation_Sans',sans-serif]">
            {['M6 1v8L2 5zM1 1v8', 'M7 1v8L3 5z', 'M3 1v8l4-4z', 'M2 1v8l4-4zM8 1v8'].map((d) => (
                <button key={d} aria-label="Scroll tabs" className="flex w-[17px] items-center justify-center border-r-2 border-b-2 border-[#8a8a8a] bg-[#e6e6e6]">
                    <svg viewBox="0 0 10 10" className="size-[10px]"><path d={d} fill="#999" stroke="#999" /></svg>
                </button>
            ))}
            <SheetTab bold className="w-[122px]">Command Message</SheetTab>
            <SheetTab className="-ml-1 w-[112px]">Analysis Message</SheetTab>
            <span className="flex-1 border-t border-r border-[#555]" />
            <div className="ml-1 flex w-[312px] justify-between border-l-2 border-black bg-[#f6f6f6]">
                <div className="flex">
                    <button aria-label="Scroll left" className="flex w-4 items-center justify-center border-r-2 border-b-2 border-[#888] bg-[#eee]"><Caret className="rotate-90" /></button>
                    <span className="w-4 border-r-2 border-b-2 border-[#888] bg-[#eee]" />
                </div>
                <button aria-label="Scroll right" className="flex w-[14px] items-center justify-center border-r-2 border-b-2 border-[#888] bg-[#eee]"><Caret className="-rotate-90" /></button>
            </div>
        </div>
    </section>
);

const viewTools = ['zoomFit', 'zoomWindow', 'zoomIn', 'zoomOut', 'zoomAll', '.', 'zoomDynamic', 'pan', 'rotate', '.', 'redraw', 'fullView', '-', 'cubeSolid', 'cubeWire', 'cubeWire2', 'cubeHalf', 'axes', '-', 'winLeft', 'winHand'];

const ViewToolbar = () => (
    <div className="w-[26px] shrink-0 bg-[#151619] pl-[3px]">
        <div className="flex w-[21px] flex-col items-center rounded-[3px] bg-[#ececec]">
            <span className="my-[4px] w-3 border-t-2 border-dotted border-[#999]" />
            {viewTools.map((n, i) => {
                if (n === '.') return <span key={i} className="my-[4px] w-3 border-t-2 border-dotted border-[#999]" />;
                if (n === '-') return <span key={i} className="my-[2px] w-3 border-t border-[#555]" />;
                return (
                    <button key={i} aria-label={n} className="flex h-[21px] items-center"><Icon name={n} className="size-[15px]" /></button>
                );
            })}
        </div>
    </div>
);

const Spinner = ({ label, value, className }: { label: string; value: string; className: string }) => (
    <span className={`flex h-[17px] border-t-2 border-l-2 border-[#777] bg-white ${className}`}>
        <input aria-label={label} defaultValue={value} className="min-w-0 flex-1 text-center outline-none" />
        <span className="flex w-[14px] shrink-0 flex-col items-center justify-around bg-[#e4e4e4]">
            <Caret className="rotate-180" />
            <span className="h-px w-full bg-[#888]" />
            <Caret />
        </span>
    </span>
);

const StatusBar = () => (
    <footer className="flex h-[18px] shrink-0 items-center bg-linear-to-b from-[#303c50] to-[#18202f] text-[#ddd]">
        <span className="w-[439px] pl-[5px] text-[12px]">For Help, press F1</span>
        <span className="w-[102px] border-l border-[#111] pl-[9px]">None!</span>
        <span className="w-[150px] border-l border-[#111] pl-[3px] text-[12px]">U: 30, 0, 0</span>
        <span className="flex-1 border-l border-[#111] pl-[5px] text-[12px]">G: 30, 0, 0</span>
        <div className="flex h-full w-[347px] items-center bg-[#ececec] text-[#222]">
            <Combo id="force" label="Force unit" value="kN" className="ml-[1px] h-[17px] w-[43px]" />
            <Combo id="length" label="Length unit" value="m" className="ml-[5px] h-[17px] w-[43px]" />
            <span className="ml-1 h-full w-px bg-[#333]" />
            {['M8 5l3 3-3 3-3-3zM1 8h4M11 8h4M8 1v4M8 11v4', 'M4 2v12M7 2v12M1 8h12M10 5h4M10 11h4', 'M5 2v12l7-6z'].map((d, i) => (
                <RaisedButton key={d} className={i === 0 ? 'ml-[6px] flex h-[17px] w-[18px] items-center justify-center' : 'ml-1 flex h-[17px] w-[18px] items-center justify-center'}>
                    <svg viewBox="0 0 16 16" className="size-[14px]" aria-hidden="true"><path d={d} fill={i === 2 ? '#888' : 'none'} stroke="#888" /></svg>
                </RaisedButton>
            ))}
            <Combo id="filter" label="Filter" value="none" className="ml-[3px] h-[17px] w-[39px]" />
            <button className="ml-2 h-[17px] w-[18px] border-2 border-[#2ad0d0] bg-white leading-3 font-bold">?</button>
            <button aria-label="Colour" className="ml-[3px] h-[17px] w-[17px] border border-[#777] bg-[#00ffff]" />
            <Spinner label="Step" value="0" className="ml-[2px] w-[30px] text-[#888]" />
            <span className="mx-1">/</span>
            <Spinner label="Steps" value="2" className="ml-[2px] w-[44px]" />
        </div>
        <span className="h-full w-[26px] bg-[#151619]" />
    </footer>
);

const apps: React.ReactNode[] = [
    <g key="flower" fill="#3f72d8" stroke="#16264f" strokeWidth="1.500">
        <circle cx="16" cy="6" r="4.500" fill="#b3c6ea" /><circle cx="7" cy="11" r="4.500" /><circle cx="25" cy="11" r="4.500" />
        <circle cx="7" cy="21" r="4.500" /><circle cx="25" cy="21" r="4.500" /><circle cx="16" cy="26" r="4.500" /><circle cx="16" cy="16" r="4.500" />
    </g>,
    <g key="folder">
        <path d="M1 4h9l2 3h18v18H1z" fill="#e9cf73" stroke="#b7984a" />
        <path d="M4 3h7v7H4zM21 5h8v7h-8z" fill="#f7f0c2" stroke="#caa" />
        <path d="M5 4h3v2H5z" fill="#4b9a3e" />
        <path d="M23 6h3v2h-3z" fill="#c44" />
        <path d="M1 10h30v16H1z" fill="#f9e8a4" stroke="#c5a95c" />
        <path d="M5 30V19h22v11h-5v-6H11v6z" fill="#8fcfe6" stroke="#4b9dba" />
    </g>,
    <g key="excel">
        <path d="M1 26V10c0-5 3-8 8-8h15l6 4v22z" fill="#e6f2dd" stroke="#69a35a" strokeWidth="1.500" />
        <path d="M11 10h19v18l-19-1z" fill="#fff" stroke="#9ab" />
        <path d="M22 11h6v4h-6zM22 17h6v4h-6zM13 22h6v3h-6zM22 23h6v3h-6z" fill="#84a66d" />
        <path d="M7 10l12 12M19 9L7 23" stroke="#2f5f2a" strokeWidth="4" />
    </g>,
    <g key="cad">
        <path d="M3 11h27v20H3z" fill="#f6f6f6" stroke="#bbb" />
        <path d="M11 0l10 20-6-2-10 5z" fill="#c4252d" />
        <path d="M11 0L8 21l-4 2z" fill="#8d1219" />
        <text x="21" y="18" fontSize="8" fill="#a33">20</text>
        <text x="22" y="26" fontSize="8" fill="#a33">10</text>
    </g>,
    <g key="bridge" fill="none">
        <path d="M0 5h32M6 6c0 5 2 7 5 7s5-2 5-7M16 6c0 5 2 7 5 7s5-2 5-7" stroke="#1a22d0" strokeWidth="2.500" />
        <path d="M5 18h22v8H5zM10 18v8M16 18v8M22 18v8" stroke="#c0707a" strokeWidth="1.500" />
        <path d="M0 18h32" stroke="#333" />
        <path d="M0 17h2v2H0zM5 17h2v2H5zM15 17h2v2h-2zM25 17h2v2h-2zM30 17h2v2h-2zM5 25h2v2H5zM15 25h2v2h-2zM25 25h2v2h-2z" fill="#222" />
    </g>,
];

const trayIcons: React.ReactNode[] = [
    <g key="0"><path d="M1 2h14v12H1z" fill="#10180c" /><path d="M3 8c3-5 8-4 10 0-3 4-7 4-10 0z" fill="#76b900" /><circle cx="8" cy="8" r="2" fill="#10180c" /></g>,
    <g key="1"><path d="M1 1h14v14H1z" fill="#f29a22" /><circle cx="8" cy="8" r="3.500" fill="none" stroke="#fff" strokeWidth="2" /><path d="M12 4v8" stroke="#fff" strokeWidth="2" /></g>,
    <g key="2"><path d="M2 1h4v9H2z" fill="#aaa" stroke="#555" /><circle cx="10" cy="10" r="5" fill="#2ea33a" /><path d="M7 10l2 3 4-5" stroke="#fff" fill="none" strokeWidth="2" /></g>,
    <g key="3"><path d="M1 1h14v14H1z" fill="#2f8fd3" /><circle cx="8" cy="5" r="2" fill="#fff" /><path d="M8 6v8M4 2c-2 2-2 5 0 7M12 2c2 2 2 5 0 7" stroke="#fff" fill="none" strokeWidth="1.500" /></g>,
    <g key="4"><path d="M4 4v7l-2-2M10 2v11l-4-3M10 13l4-3" stroke="#8fb04e" strokeWidth="2.500" fill="none" /></g>,
    <g key="5"><path d="M1 6h3l5-4v12l-5-4H1z" fill="#d98a72" stroke="#733" /><path d="M11 5c2 2 2 4 0 6M13 3c3 3 3 7 0 10" stroke="#733" fill="none" /></g>,
    <g key="6"><path d="M1 2h14v10H1z" fill="#363f5e" /><circle cx="8" cy="7" r="4" fill="#e22" /><path d="M5 5l6 4" stroke="#fff" /><path d="M2 14h12" stroke="#226" strokeWidth="2" /></g>,
    <g key="7"><circle cx="8" cy="8" r="6.500" fill="#7492b4" stroke="#1f3350" /><circle cx="8" cy="8" r="3" fill="none" stroke="#1f3350" strokeWidth="1.500" /><path d="M2 7c2-4 8-5 10-3M14 9c-2 4-8 5-10 3" stroke="#dde6f0" fill="none" /></g>,
    <g key="8"><path d="M1 1h14v14H1z" fill="#bbb" /><path d="M5 4c-3 6 1 8 4 8s5-5 2-8H8" stroke="#fff" fill="none" strokeWidth="2.500" /></g>,
    <g key="9"><ellipse cx="8" cy="8" rx="5.500" ry="7.500" fill="#174f93" /><path d="M5 5l6 6-3 2.500v-11L11 5l-6 6" fill="none" stroke="#fff" strokeWidth="1.200" /></g>,
    <g key="10"><circle cx="8" cy="5" r="3" fill="#ddd" stroke="#555" /><circle cx="8" cy="11" r="3.500" fill="#bbb" stroke="#444" /><path d="M5 9l6 4M11 9l-6 4" stroke="#333" /></g>,
    <g key="11"><path d="M3 1v14" stroke="#fff" strokeWidth="2" /><path d="M4 2h6v2h5l-2 3 1 3H9V8H4z" fill="#fff" stroke="#555" strokeWidth=".6" /></g>,
    <g key="12"><path d="M1 5h8v10H1z" fill="#b3242a" /><path d="M9 2v4M13 2v4M7 6h8v3l-3 2v4" stroke="#fff" fill="none" strokeWidth="1.500" /><path d="M2 2h4v4H2z" fill="#ddd" /></g>,
    <g key="13" fill="#eee" stroke="#667" strokeWidth=".5"><path d="M1 11h2v3H1zM4 9h2v5H4zM7 7h2v7H7zM10 4h2v10h-2zM13 2h2v12h-2z" /></g>,
    <g key="14"><path d="M1 6h3l4-4v12l-4-4H1z" fill="#fff" stroke="#555" strokeWidth=".6" /><path d="M10 5c2 2 2 4 0 6M12 3c3 3 3 7 0 10" stroke="#fff" fill="none" /></g>,
];

const Taskbar = () => (
    <nav className="flex w-[56px] shrink-0 flex-col items-center border-l border-[#5b6675] bg-linear-to-b from-[#8492aa] via-[#8a9bb2] to-[#7e90a8] text-white">
        <div className="flex h-[149px] w-full flex-col items-center bg-linear-to-b from-[#8a96ac] from-30% to-[#a9bfdb] pt-[9px] pl-[4px]">
            <button aria-label="Start">
                <svg viewBox="0 0 36 36" className="size-9">
                    <circle cx="18" cy="18" r="16.500" fill="#1b6b9e" stroke="#c4d6e4" />
                    <path d="M3 20c8 5 22 5 30 0a15.500 15.500 0 0 1-30 0z" fill="#24b3cf" />
                    <path d="M4 13c5-11 23-11 28 0-8-3-20-3-28 0z" fill="#7fa5bf" />
                    <path d="M10 10c3-1 5-1 7 0v7c-3-1-5-1-8 0z" fill="#e75d22" />
                    <path d="M19 11c3 1 5 1 8 0l-1 7c-3 1-5 1-8 0z" fill="#8cc63e" />
                    <path d="M8 19c3-1 5-1 8 0l-1 7c-3-1-5-1-7 0z" fill="#3aa4e8" />
                    <path d="M18 20c3 1 5 1 8 0l-1 7c-3 1-5 1-7 0z" fill="#fbc62b" />
                </svg>
            </button>
            <button aria-label="Browser" className="mt-5">
                <svg viewBox="0 0 32 32" className="size-[30px]">
                    <circle cx="16" cy="16" r="14" fill="#e8681c" />
                    <circle cx="17" cy="12" r="10" fill="#2d83b9" />
                    <path d="M13 4c5 0 10 3 11 9l-4-3 1 7c-3 4-8 4-10 1l5-3z" fill="#1f5b8e" />
                    <path d="M2 14c1-4 3-7 5-8l1 4 5 1-2 3c0 6 6 9 12 6 3-2 5-6 4-12 4 5 4 14-2 18-8 6-22 3-23-12z" fill="#ea6a1d" />
                    <path d="M27 8c4 5 4 14-2 18-4 3-9 3-13 2 9 0 16-6 15-20z" fill="#f9c335" />
                </svg>
            </button>
            <button aria-label="Player" className="mt-[14px]">
                <svg viewBox="0 0 32 32" className="size-[30px]">
                    <path d="M16 2l14 14-14 14L2 16z" fill="#fff" stroke="#222" strokeWidth="1.500" />
                    <path d="M28 4l-1 6-5 4 3 2L4 30l3-8 5-4-4-2z" fill="#e6a54a" stroke="#33250f" strokeWidth="1.500" />
                </svg>
            </button>
        </div>
        {apps.map((app, i) => (
            <button key={i} aria-label={`Task ${i + 1}`} className="mb-[2px] flex h-[43px] w-full items-center justify-center rounded-[2px] border border-[#4b5a6e] bg-linear-to-br from-[#cfdcee] to-[#a3b6d1] pl-[5px]">
                <svg viewBox="0 0 32 32" className="size-[30px]">{app}</svg>
            </button>
        ))}
        <button aria-label="Civil" className="flex h-[43px] w-full items-center justify-center rounded-[2px] border border-[#8796ab] bg-linear-to-b from-[#eef4fb] to-[#b9cae2] pl-[5px]">
            <Logo className="size-[32px]" />
        </button>
        <span className="mt-[37px]">TR</span>
        <div className="mt-[9px] mr-[5px] grid grid-cols-2 gap-x-[6px] gap-y-[7px]">
            {trayIcons.map((t, i) => (
                <svg key={i} viewBox="0 0 16 16" className="size-[15px]">{t}</svg>
            ))}
        </div>
        <div className="mt-1 flex flex-col items-center pl-[4px] text-[10px] leading-4 whitespace-nowrap">
            <span>12:32</span>
            <span>Cuma</span>
            <span>21.11.2014</span>
        </div>
        <span className="mt-[2px] w-full flex-1 border-t border-[#444] bg-[#7b8696]" />
    </nav>
);

export default function App() {
    return (
        <div className="flex h-screen w-full overflow-hidden bg-[#131417] font-['DejaVu_Sans_Condensed','DejaVu_Sans',sans-serif] text-[11px]">
            <div className="flex min-w-0 flex-1 flex-col">
                <Header />
                <Ribbon />
                <Toolbar />
                <main className="flex min-h-0 flex-1">
                    <TreePanel />
                    <div className="flex min-w-0 flex-1 flex-col border-l-2 border-[#131417] pt-[2px]">
                        <ModelView />
                        <MessageWindow />
                        <div className="h-[2px]" />
                    </div>
                    <ViewToolbar />
                </main>
                <StatusBar />
            </div>
            <Taskbar />
            <div className="flex w-[6px] shrink-0 flex-col">
                <div className="h-[165px] bg-[repeating-linear-gradient(#eee_0_15px,#222_15px_16px,#eee_16px_20px,#444_20px_21px)]" />
                <div className="flex-1 bg-[repeating-linear-gradient(#e8e8e8_0_27px,#333_27px_28px,#e8e8e8_28px_46px,#666_46px_47px)]" />
                <div className="h-[250px] bg-[repeating-linear-gradient(#8d8d8d_0_9px,#777_9px_11px,#999_11px_17px,#666_17px_18px)]" />
            </div>
        </div>
    );
}
